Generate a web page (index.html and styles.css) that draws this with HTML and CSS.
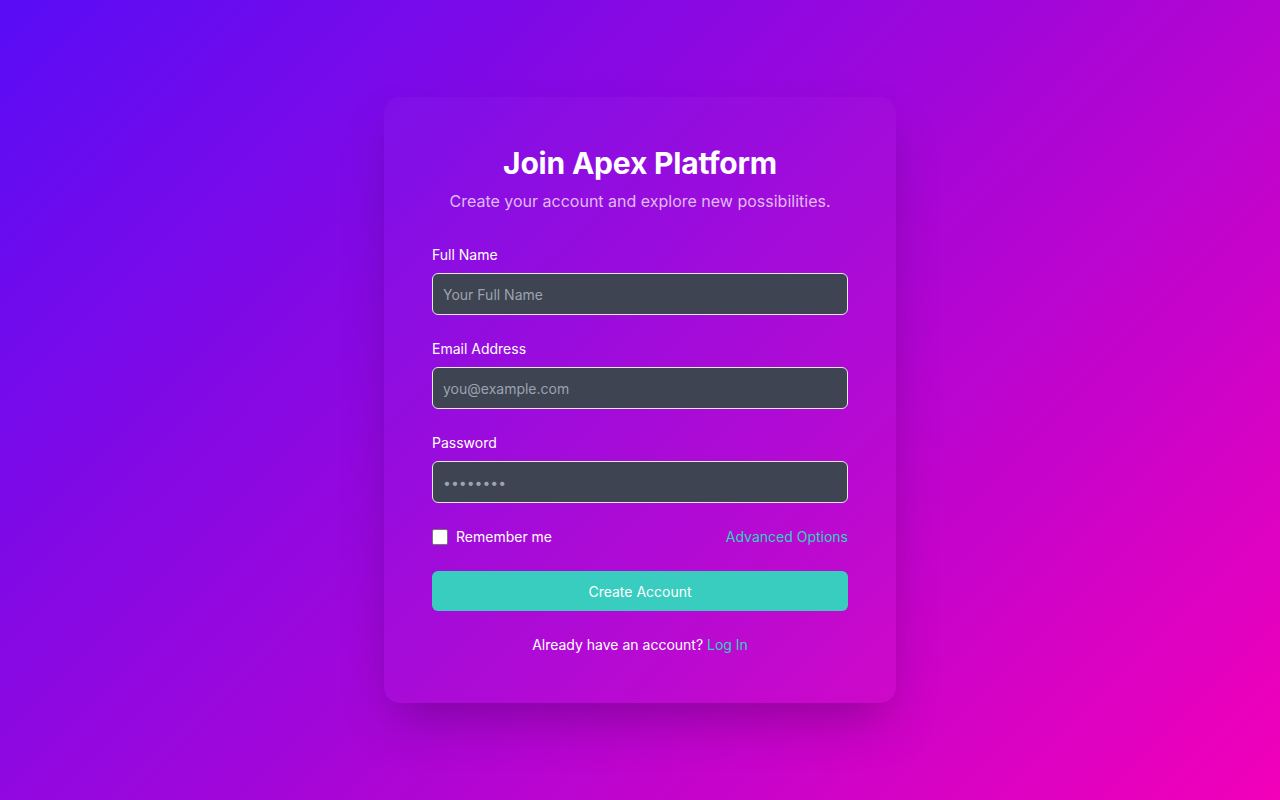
FILE: index.html
```html
<!DOCTYPE html>
<html lang="en">
<head>
<meta charset="utf-8">
<title>Join Apex Platform</title>
<link rel="stylesheet" href="styles.css">
</head>
<body>
<main class="page">
  <section class="card">
    <h1 class="title">Join Apex Platform</h1>
    <p class="subtitle">Create your account and explore new possibilities.</p>
    <form class="form">
      <div class="field">
        <label class="label" for="name">Full Name</label>
        <input class="input" id="name" type="text" placeholder="Your Full Name">
      </div>
      <div class="field">
        <label class="label" for="email">Email Address</label>
        <input class="input" id="email" type="email" placeholder="you@example.com">
      </div>
      <div class="field">
        <label class="label" for="pw">Password</label>
        <input class="input" id="pw" type="password" placeholder="••••••••">
      </div>
      <div class="row">
        <label class="check"><span class="box"></span><span>Remember me</span></label>
        <a class="link" href="#">Advanced Options</a>
      </div>
      <button class="btn" type="button">Create Account</button>
    </form>
    <p class="foot">Already have an account? <a class="link" href="#">Log In</a></p>
  </section>
</main>
</body>
</html>
```
FILE: styles.css
```css
* { box-sizing: border-box; }
html, body { margin: 0; height: 100%; }
body {
  font-family: Inter, "Noto Sans", sans-serif;
  background: linear-gradient(135deg, #590df6 0%, #9a07dc 45%, #f300b9 100%);
  color: #fff;
}
.page {
  min-height: 100vh;
  display: flex;
  align-items: center;
  justify-content: center;
}
.card {
  width: 512px;
  padding: 48px;
  border-radius: 16px;
  background: rgba(255,255,255,0.025);
  box-shadow: 0 25px 50px -12px rgba(40,0,60,0.35);
}
.title {
  margin: 0;
  font-size: 30px;
  line-height: 36px;
  font-weight: 700;
  text-align: center;
  letter-spacing: -0.2px;
}
.subtitle {
  margin: 8px 0 0;
  font-size: 16px;
  line-height: 24px;
  text-align: center;
  color: rgba(255,255,255,0.72);
}
.form {
  margin-top: 32px;
  display: flex;
  flex-direction: column;
  gap: 24px;
}
.field { display: flex; flex-direction: column; gap: 8px; }
.label { font-size: 14px; line-height: 20px; font-weight: 400; }
.input {
  height: 42px;
  padding: 0 10px;
  border: 1px solid #e5e7eb;
  border-radius: 6px;
  background: #3e4451;
  color: #fff;
  font-family: inherit;
  font-size: 14px;
  outline: none;
}
.input::placeholder { color: #9ca3af; }
.row {
  display: flex;
  align-items: center;
  justify-content: space-between;
  height: 20px;
  font-size: 14px;
  line-height: 20px;
}
.check { display: flex; align-items: center; gap: 8px; font-weight: 400; }
.box {
  width: 16px; height: 16px;
  background: #fff;
  border: 1px solid #767676;
  border-radius: 2px;
}
.link { color: #2dd4bf; text-decoration: none; }
.btn {
  height: 40px;
  border: 0;
  border-radius: 6px;
  background: #38cdbf;
  color: #fff;
  font-family: inherit;
  font-size: 14px;
  font-weight: 400;
}
.foot {
  margin: 24px 0 0;
  text-align: center;
  font-size: 14px;
  line-height: 20px;
  font-weight: 400;
}
```
